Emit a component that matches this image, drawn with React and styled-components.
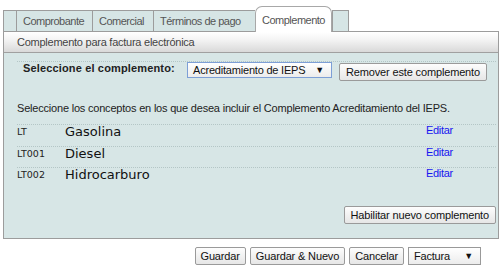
import React from 'react';
import styled, { createGlobalStyle } from 'styled-components';

const GlobalStyle = createGlobalStyle`
  body {
    margin: 0;
    background: #fff;
    font-family: "Liberation Sans", Arial, sans-serif;
  }
`;

const Page = styled.div`
  width: 500px;
  height: 267px;
  padding: 5px 1px 0 3px;
  box-sizing: border-box;
`;

const TabBar = styled.div`
  display: flex;
  align-items: flex-end;
  height: 26px;
  border-bottom: 1px solid #9c9c9c;
`;

const Tab = styled.div`
  box-sizing: border-box;
  height: 21px;
  width: ${p => p.$w}px;
  padding-left: ${p => (p.$empty ? 0 : 6)}px;
  background: #d6e5e5;
  border-top: 1px solid #9c9c9c;
  border-left: 1px solid #9c9c9c;
  border-right: ${p => (p.$last ? '1px solid #9c9c9c' : 'none')};
  font-size: 11px;
  letter-spacing: -0.5px;
  line-height: 20px;
  color: #555;
  white-space: nowrap;
`;

const ActiveTab = styled.div`
  box-sizing: border-box;
  width: 77px;
  height: 26px;
  margin-bottom: -1px;
  padding: 3px 0 0 6px;
  background: #fff;
  border: 1px solid #a8a8a8;
  border-bottom: none;
  border-radius: 7px 7px 0 0;
  font-size: 11px;
  letter-spacing: -0.5px;
  line-height: 20px;
  color: #555;
`;

const Panel = styled.div`
  border-left: 1px solid #9c9c9c;
  border-right: 1px solid #9c9c9c;
  border-bottom: 1px solid #9c9c9c;
  background: #d7e6e6;
`;

const SubHeader = styled.div`
  height: 20px;
  padding-left: 13px;
  background: linear-gradient(#ffffff, #f3f3f3 40%, #d9d9d9);
  border-bottom: 1px solid #a0a0a0;
  font-size: 11px;
  letter-spacing: -0.25px;
  line-height: 20px;
  color: #444;
`;

const Body = styled.div`
  padding: 8px 2px 14px 13px;
`;

const PickerRow = styled.div`
  display: flex;
  align-items: flex-start;
  height: 31px;
  border-top: 1px dotted #b4c6c6;
`;

const PickerLabel = styled.div`
  width: 164px;
  margin-top: -1px;
  padding-left: 6px;
  font-size: 11px;
  font-weight: bold;
  letter-spacing: 0.15px;
  line-height: 14px;
  color: #222;
`;

const SelectBox = styled.div`
  box-sizing: border-box;
  display: flex;
  justify-content: space-between;
  align-items: center;
  width: ${p => p.$w}px;
  height: ${p => p.$h || 16}px;
  padding: 0 7px 0 5px;
  background: linear-gradient(#ffffff, #ececec);
  border: 1px solid ${p => (p.$focus ? '#7d9fd6' : '#999')};
  font-size: 11px;
  letter-spacing: -0.2px;
  color: #111;
  white-space: nowrap;
`;

const Arrow = styled.span`
  font-size: 9px;
  color: #111;
`;

const Button = styled.button`
  box-sizing: border-box;
  height: 18px;
  margin: ${p => p.$margin || 0};
  padding: 0 6px;
  background: linear-gradient(#fdfdfd, #e6e6e6);
  border: 1px solid #9a9a9a;
  border-radius: 2px;
  font-family: "Liberation Sans", Arial, sans-serif;
  font-size: 11px;
  letter-spacing: -0.15px;
  line-height: 16px;
  color: #111;
  white-space: nowrap;
`;

const FormButton = styled(Button)`
  padding: 0 5px;
`;

const Intro = styled.p`
  box-sizing: border-box;
  margin: 8px 0 0;
  height: 23px;
  font-size: 11px;
  letter-spacing: -0.2px;
  line-height: 14px;
  color: #222;
`;

const ConceptList = styled.div`
  display: flex;
  flex-direction: column;
`;

const ConceptRow = styled.div`
  box-sizing: border-box;
  display: flex;
  align-items: flex-start;
  height: 21.5px;
  border-top: 1px dotted #b4c6c6;
  line-height: 13px;
`;

const Code = styled.span`
  width: 48px;
  font-family: "DejaVu Sans", Verdana, sans-serif;
  font-size: 9.5px;
  color: #222;
`;

const Name = styled.span`
  flex: 1;
  font-family: "DejaVu Sans", Verdana, sans-serif;
  font-size: 13px;
  color: #111;
`;

const EditLink = styled.a`
  width: 70px;
  margin-top: -1px;
  font-size: 11px;
  letter-spacing: -0.3px;
  color: #1717f0;
  text-decoration: none;
  cursor: pointer;
`;

const PanelFooter = styled.div`
  display: flex;
  justify-content: flex-end;
  margin-top: 17.5px;
`;

const Actions = styled.div`
  display: flex;
  justify-content: flex-end;
  gap: 4px;
  padding: 8px 18px 0 0;
`;

const concepts = [
  { code: 'LT', name: 'Gasolina' },
  { code: 'LT001', name: 'Diesel' },
  { code: 'LT002', name: 'Hidrocarburo' },
];

export default function App() {
  return (
    <Page>
      <GlobalStyle />
      <TabBar>
        <Tab $w={13} $empty />
        <Tab $w={76}>Comprobante</Tab>
        <Tab $w={61}>Comercial</Tab>
        <Tab $w={102}>Términos de pago</Tab>
        <ActiveTab>Complemento</ActiveTab>
        <Tab $w={17} $empty $last />
      </TabBar>
      <Panel>
        <SubHeader>Complemento para factura electrónica</SubHeader>
        <Body>
          <PickerRow>
            <PickerLabel>Seleccione el complemento:</PickerLabel>
            <SelectBox $w={145} $focus>
              <span>Acreditamiento de IEPS</span>
              <Arrow>▼</Arrow>
            </SelectBox>
            <Button $margin="1px 0 0 7px">Remover este complemento</Button>
          </PickerRow>
          <Intro>
            Seleccione los conceptos en los que desea incluir el Complemento Acreditamiento del IEPS.
          </Intro>
          <ConceptList>
            {concepts.map(c => (
              <ConceptRow key={c.code}>
                <Code>{c.code}</Code>
                <Name>{c.name}</Name>
                <EditLink>Editar</EditLink>
              </ConceptRow>
            ))}
          </ConceptList>
          <PanelFooter>
            <Button>Habilitar nuevo complemento</Button>
          </PanelFooter>
        </Body>
      </Panel>
      <Actions>
        <FormButton>Guardar</FormButton>
        <FormButton>Guardar &amp; Nuevo</FormButton>
        <FormButton>Cancelar</FormButton>
        <SelectBox $w={73} $h={18}>
          <span>Factura</span>
          <Arrow>▼</Arrow>
        </SelectBox>
      </Actions>
    </Page>
  );
}
